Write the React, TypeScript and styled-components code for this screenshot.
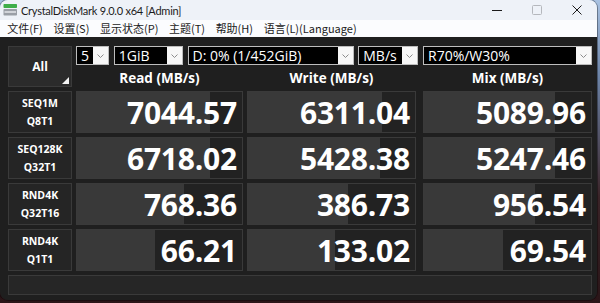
import styled, { createGlobalStyle } from "styled-components";

const GlobalStyle = createGlobalStyle`
  html, body {
    margin: 0;
    padding: 0;
  }
  body {
    width: 600px;
    height: 303px;
    overflow: hidden;
    background: linear-gradient(180deg, #a9c2e2 0%, #6d84a8 25%, #3b2428 65%, #2b1518 100%);
    font-family: "Open Sans", "Noto Sans", sans-serif;
  }
`;

const Window = styled.div`
  width: 597px;
  height: 300px;
  border-radius: 8px;
  overflow: hidden;
  display: flex;
  flex-direction: column;
  box-shadow: 0 0 0 1px rgba(0, 0, 0, 0.35);
`;

const TitleBar = styled.div`
  height: 20px;
  display: flex;
  align-items: center;
  background: #eef2f8;
  color: #1b1b1b;
`;

const TitleText = styled.span`
  margin-left: 3px;
  font-family: Lato, "Open Sans", sans-serif;
  font-size: 11px;
  letter-spacing: -0.25px;
  white-space: nowrap;
`;

const Controls = styled.div`
  margin-left: auto;
  display: flex;
  height: 100%;
`;

const ControlButton = styled.div`
  width: 40px;
  height: 100%;
  display: flex;
  align-items: center;
  justify-content: center;
`;

const MenuBar = styled.div`
  height: 17px;
  display: flex;
  align-items: center;
  padding-left: 2px;
  background: #fbfcfe;
`;

const MenuItem = styled.span`
  padding: 0 5.3px;
  font-family: "Noto Sans CJK SC", "Open Sans", sans-serif;
  font-size: 11px;
  line-height: 17px;
  color: #1b1b1b;
  white-space: nowrap;
`;

const Panel = styled.div`
  flex: 1;
  background: #1f1f1f;
  padding: 9px 0 0 8px;
`;

const Grid = styled.div`
  display: grid;
  grid-template-columns: 64px 167px 169px 172px;
  grid-template-rows: 19px 18px repeat(4, 42px) 20px;
  column-gap: 4px;
  row-gap: 4px;
`;

const AllButton = styled.div`
  grid-column: 1;
  grid-row: 1 / 3;
  position: relative;
  box-sizing: border-box;
  background: #2b2b2b;
  border: 1px solid #3a3a3a;
  display: flex;
  align-items: center;
  justify-content: center;
  color: #fff;
  font-weight: 700;
  font-size: 12px;
`;

const Corner = styled.span`
  position: absolute;
  right: 2px;
  bottom: 2px;
  width: 0;
  height: 0;
  border-left: 7px solid transparent;
  border-bottom: 7px solid #f2f2f2;
`;

const SelectRow = styled.div`
  grid-column: 2 / 5;
  grid-row: 1;
  display: flex;
  justify-content: space-between;
`;

const Select = styled.div<{ $w: number }>`
  width: ${(p) => p.$w}px;
  height: 19px;
  box-sizing: border-box;
  display: flex;
  border: 1px solid #bdbdbd;
  background: #f7f7f7;
`;

const SelectValue = styled.div`
  flex: 1;
  background: #000;
  color: #fff;
  font-size: 14px;
  line-height: 17px;
  padding-left: 4px;
  white-space: nowrap;
  overflow: hidden;
`;

const SelectArrow = styled.div`
  width: 15px;
  display: flex;
  align-items: center;
  justify-content: center;
`;

const Header = styled.div<{ $last: boolean }>`
  grid-row: 2;
  justify-self: ${(p) => (p.$last ? "end" : "stretch")};
  width: ${(p) => (p.$last ? "169px" : "auto")};
  color: #fff;
  font-weight: 700;
  font-size: 13.5px;
  line-height: 18px;
  text-align: center;
  white-space: nowrap;
`;

const LabelCell = styled.div`
  box-sizing: border-box;
  background: #252525;
  border: 1px solid #3a3a3a;
  display: flex;
  flex-direction: column;
  align-items: center;
  justify-content: center;
  color: #fff;
  font-weight: 700;
  font-size: 10.5px;
  line-height: 18px;
`;

const ValueCell = styled.div<{ $last: boolean }>`
  position: relative;
  box-sizing: border-box;
  width: ${(p) => (p.$last ? "169px" : "auto")};
  justify-self: ${(p) => (p.$last ? "end" : "stretch")};
  background: #222;
  border: 1px solid #3a3a3a;
  overflow: hidden;
  display: flex;
  align-items: center;
  justify-content: flex-end;
  padding: 2px 5px 0 0;
`;

const Bar = styled.div`
  position: absolute;
  left: 0;
  top: 0;
  bottom: 0;
  background: #393939;
`;

const Value = styled.span`
  position: relative;
  color: #fff;
  font-weight: 700;
  font-size: 30px;
  line-height: 1;
  letter-spacing: -0.2px;
`;

const Footer = styled.div`
  grid-column: 1 / 5;
  box-sizing: border-box;
  background: #262626;
  border: 1px solid #3a3a3a;
`;

const Chevron = () => (
  <svg width="7" height="4" viewBox="0 0 7 4">
    <polyline points="0.5,0.5 3.5,3.5 6.5,0.5" fill="none" stroke="#8c8c8c" strokeWidth="1" />
  </svg>
);

const AppIcon = () => (
  <svg width="15" height="14" viewBox="0 0 15 14" style={{ marginLeft: 3 }}>
    <rect x="0.5" y="1" width="13.5" height="4" rx="0.8" fill="#3fae4a" />
    <rect x="0.5" y="6" width="13.5" height="6.5" rx="0.8" fill="#9a9fa6" />
    <rect x="1.5" y="8.3" width="11.5" height="1.4" fill="#e9ecef" />
  </svg>
);

const selects = [
  { w: 33, text: "5" },
  { w: 69, text: "1GiB" },
  { w: 166, text: "D: 0% (1/452GiB)" },
  { w: 60, text: "MB/s" },
  { w: 169, text: "R70%/W30%" },
];

const headers = ["Read (MB/s)", "Write (MB/s)", "Mix (MB/s)"];

const rows = [
  { name: "SEQ1M", sub: "Q8T1", values: [7044.57, 6311.04, 5089.96] },
  { name: "SEQ128K", sub: "Q32T1", values: [6718.02, 5428.38, 5247.46] },
  { name: "RND4K", sub: "Q32T16", values: [768.36, 386.73, 956.54] },
  { name: "RND4K", sub: "Q1T1", values: [66.21, 133.02, 69.54] },
];

const menus = ["文件(F)", "设置(S)", "显示状态(P)", "主题(T)", "帮助(H)", "语言(L)(Language)"];

// log scale meter: one sixth of the cell per decade
const meter = (v: number) => Math.min(100, ((Math.log10(v) + 1) / 6) * 100);

export default function App() {
  return (
    <>
      <GlobalStyle />
      <Window>
        <TitleBar>
          <AppIcon />
          <TitleText>CrystalDiskMark 9.0.0 x64 [Admin]</TitleText>
          <Controls>
            <ControlButton>
              <svg width="10" height="10" viewBox="0 0 10 10">
                <line x1="0" y1="5.5" x2="10" y2="5.5" stroke="#1b1b1b" strokeWidth="1" />
              </svg>
            </ControlButton>
            <ControlButton>
              <svg width="10" height="10" viewBox="0 0 10 10">
                <rect x="0.5" y="0.5" width="9" height="9" rx="1" fill="none" stroke="#b5b8bd" strokeWidth="1" />
              </svg>
            </ControlButton>
            <ControlButton>
              <svg width="10" height="10" viewBox="0 0 10 10">
                <path d="M0.5 0.5 L9.5 9.5 M9.5 0.5 L0.5 9.5" stroke="#1b1b1b" strokeWidth="1" />
              </svg>
            </ControlButton>
          </Controls>
        </TitleBar>
        <MenuBar>
          {menus.map((m) => (
            <MenuItem key={m}>{m}</MenuItem>
          ))}
        </MenuBar>
        <Panel>
          <Grid>
            <AllButton>
              All
              <Corner />
            </AllButton>
            <SelectRow>
              {selects.map((s) => (
                <Select key={s.text} $w={s.w}>
                  <SelectValue>{s.text}</SelectValue>
                  <SelectArrow>
                    <Chevron />
                  </SelectArrow>
                </Select>
              ))}
            </SelectRow>
            {headers.map((h, i) => (
              <Header key={h} $last={i === 2}>
                {h}
              </Header>
            ))}
            {rows.map((r) => [
              <LabelCell key={r.name + r.sub}>
                <span>{r.name}</span>
                <span>{r.sub}</span>
              </LabelCell>,
              ...r.values.map((v, i) => (
                <ValueCell key={r.sub + i} $last={i === 2}>
                  <Bar style={{ width: `${meter(v)}%` }} />
                  <Value>{v.toFixed(2)}</Value>
                </ValueCell>
              )),
            ])}
            <Footer />
          </Grid>
        </Panel>
      </Window>
    </>
  );
}
